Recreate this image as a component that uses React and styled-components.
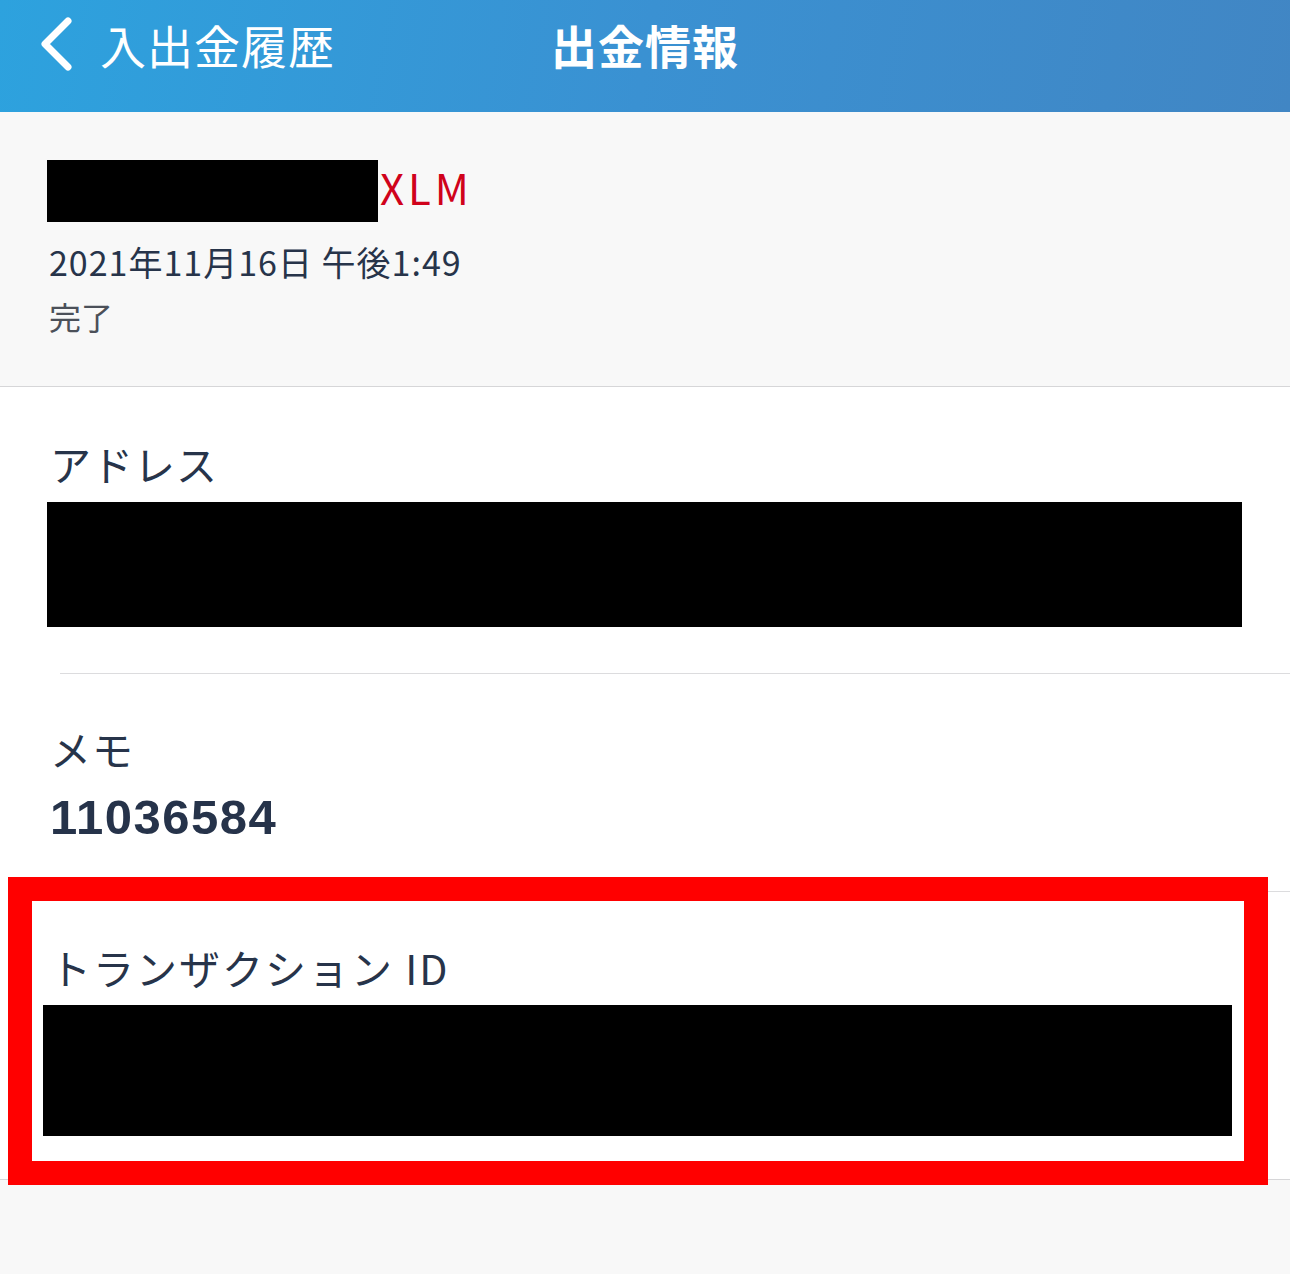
import styled, { createGlobalStyle } from "styled-components";

const GlobalStyle = createGlobalStyle`
  html, body {
    margin: 0;
    padding: 0;
    background: #f8f8f8;
  }
  body {
    font-family: "Noto Sans CJK JP", "Noto Sans", sans-serif;
    color: #26334a;
  }
`;

const Page = styled.div`
  display: flex;
  flex-direction: column;
  min-height: 100vh;
  width: 1290px;
  background: #f8f8f8;
`;

const NavBar = styled.header`
  height: 112px;
  display: grid;
  grid-template-columns: 1fr auto 1fr;
  align-items: center;
  padding: 0 38px 24px 38px;
  box-sizing: border-box;
  background: linear-gradient(100deg, #2da2de 0%, #3a91d2 50%, #4186c4 100%);
  color: #fff;
`;

const BackLink = styled.a`
  display: flex;
  align-items: center;
  gap: 26px;
  font-size: 46px;
  line-height: 1;
  letter-spacing: 1px;
  color: #fff;
  text-decoration: none;
  cursor: pointer;
`;

const NavTitle = styled.h1`
  margin: 0;
  font-size: 46px;
  font-weight: 700;
  line-height: 1;
  letter-spacing: 1px;
`;

const Summary = styled.section`
  padding: 48px 48px 0 47px;
  height: 275px;
  box-sizing: border-box;
  border-bottom: 1px solid #d6d6d8;
  background: #f8f8f8;
`;

const AmountRow = styled.div`
  display: flex;
  align-items: center;
`;

const Redacted = styled.div`
  background: #000;
  height: ${(p) => p.$h}px;
  width: ${(p) => (p.$w ? `${p.$w}px` : "auto")};
  margin-left: ${(p) => p.$ml || 0}px;
  margin-right: ${(p) => p.$mr || 0}px;
`;

const Currency = styled.span`
  color: #d0021b;
  font-size: 42px;
  line-height: 1;
  letter-spacing: 4px;
  margin: 0 0 8px 2px;
`;

const DateText = styled.div`
  margin-top: 16px;
  margin-left: 2px;
  font-size: 34px;
  line-height: 1.4;
  letter-spacing: 1px;
  color: #27344a;
`;

const StatusText = styled.div`
  margin-top: 8px;
  margin-left: 2px;
  font-size: 32px;
  line-height: 1.4;
  color: #4b5059;
`;

const Row = styled.section`
  position: relative;
  background: #fff;
  padding: ${(p) => p.$pt}px 0 ${(p) => p.$pb}px 0;
  display: flex;
  flex-direction: column;
  border-bottom: ${(p) => (p.$last ? "1px solid #d6d6d8" : "none")};

  &::after {
    content: "";
    display: ${(p) => (p.$last ? "none" : "block")};
    position: absolute;
    left: 60px;
    right: 0;
    bottom: 0;
    height: 1px;
    background: #dcdcde;
  }
`;

const Label = styled.div`
  font-size: 41px;
  line-height: 1.3;
  margin-left: 50px;
  letter-spacing: ${(p) => p.$ls || 1}px;
  color: #27344a;
`;

const Value = styled.div`
  font-family: "Liberation Sans", "Noto Sans", sans-serif;
  font-size: 49px;
  font-weight: 700;
  line-height: 1.2;
  letter-spacing: 1.5px;
  margin: 12px 0 0 50px;
  color: #26334a;
`;

const Highlight = styled.div`
  position: absolute;
  top: -15px;
  left: 8px;
  right: 22px;
  bottom: -6px;
  border: 24px solid #ff0000;
  pointer-events: none;
`;

const Chevron = () => (
  <svg width="36" height="54" viewBox="0 0 36 54" fill="none">
    <path
      d="M30 4 L7 27 L30 50"
      stroke="#fff"
      strokeWidth="7"
      strokeLinecap="round"
      strokeLinejoin="round"
    />
  </svg>
);

const App = () => {
  return (
    <>
      <GlobalStyle />
      <Page>
        <NavBar>
          <BackLink>
            <Chevron />
            入出金履歴
          </BackLink>
          <NavTitle>出金情報</NavTitle>
          <div />
        </NavBar>

        <Summary>
          <AmountRow>
            <Redacted $w={331} $h={62} />
            <Currency>XLM</Currency>
          </AmountRow>
          <DateText>2021年11月16日 午後1:49</DateText>
          <StatusText>完了</StatusText>
        </Summary>

        <Row $pt={50} $pb={47}>
          <Label>アドレス</Label>
          <Redacted $h={125} $ml={47} $mr={48} style={{ marginTop: 12 }} />
        </Row>

        <Row $pt={48} $pb={46}>
          <Label>メモ</Label>
          <Value>11036584</Value>
        </Row>

        <Row $pt={49} $pb={43} $last>
          <Label $ls={2}>トランザクション ID</Label>
          <Redacted $h={131} $ml={43} $mr={58} style={{ marginTop: 10 }} />
          <Highlight />
        </Row>
      </Page>
    </>
  );
};

export default App;
